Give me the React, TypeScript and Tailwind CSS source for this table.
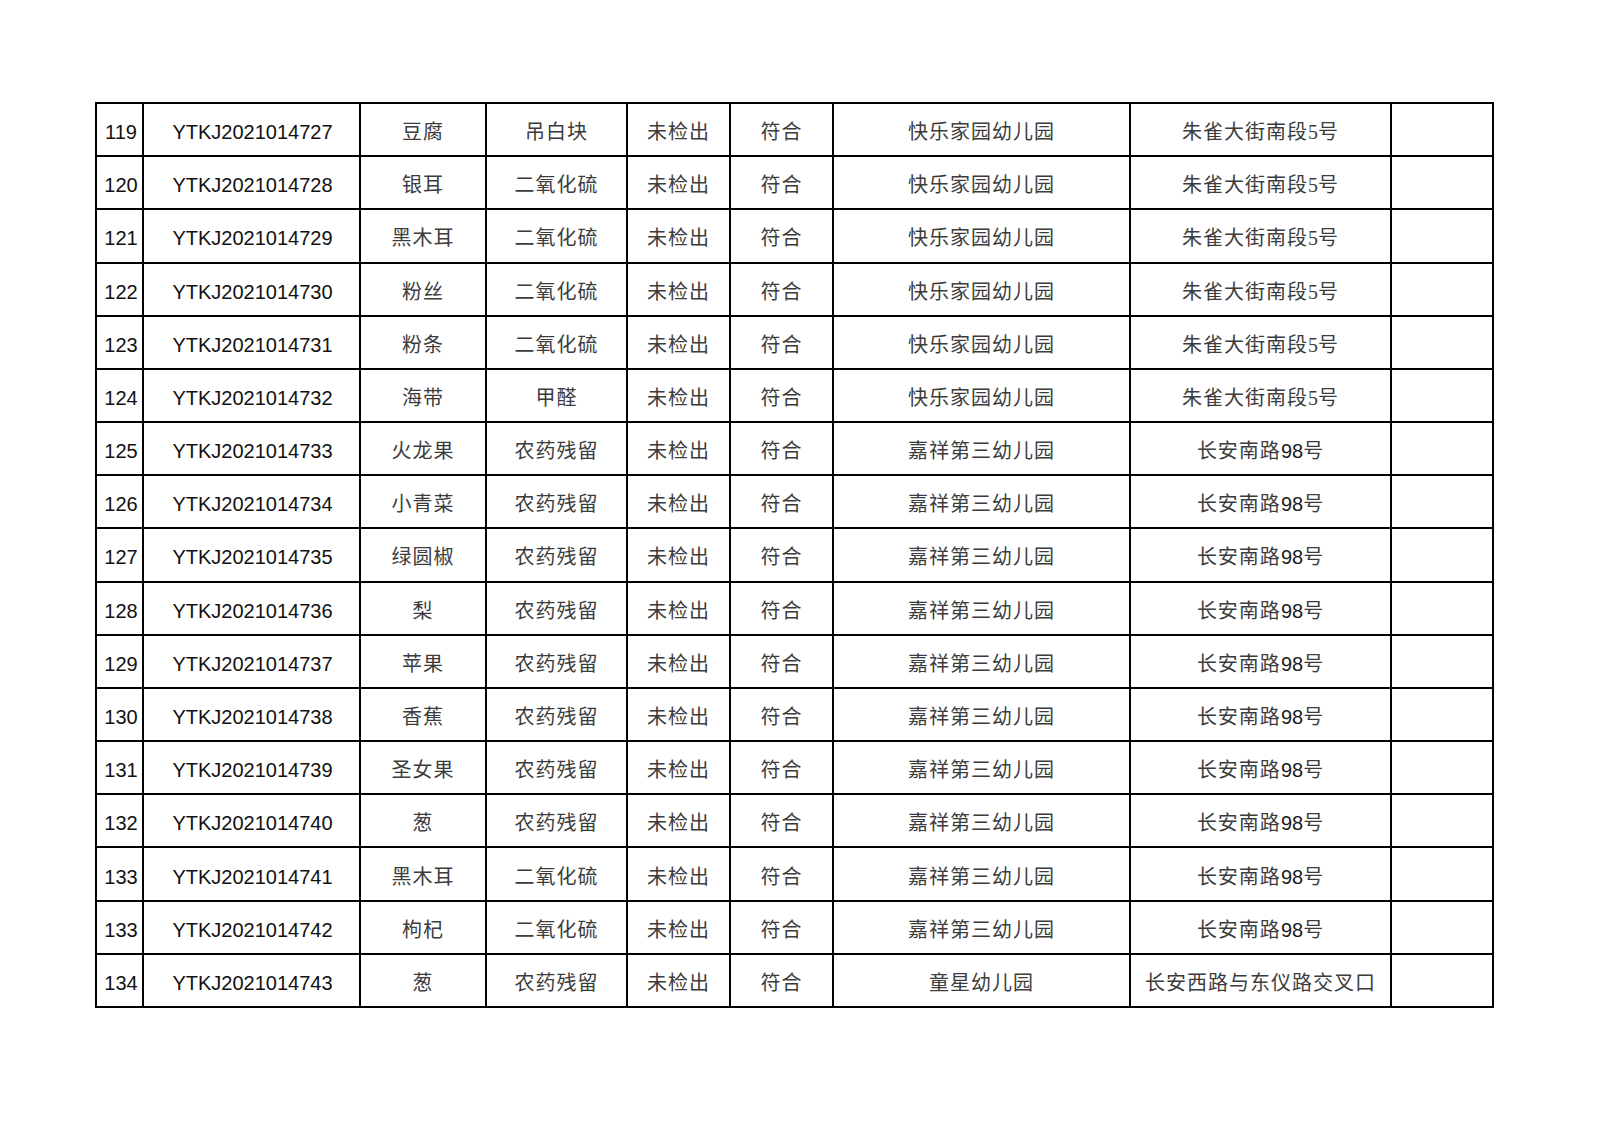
import React from "react";

type Row = [string, string, string, string, string, string, string, React.ReactNode];

const addr1 = (
  <>
    朱雀大街南段<span className="font-['Liberation_Serif'] tracking-normal">5</span>号
  </>
);
const addr2 = (
  <>
    长安南路<span className="text-[#1a1a1a] tracking-normal">98</span>号
  </>
);
const k1 = "快乐家园幼儿园";
const k2 = "嘉祥第三幼儿园";

const rows: Row[] = [
  ["119", "YTKJ2021014727", "豆腐", "吊白块", "未检出", "符合", k1, addr1],
  ["120", "YTKJ2021014728", "银耳", "二氧化硫", "未检出", "符合", k1, addr1],
  ["121", "YTKJ2021014729", "黑木耳", "二氧化硫", "未检出", "符合", k1, addr1],
  ["122", "YTKJ2021014730", "粉丝", "二氧化硫", "未检出", "符合", k1, addr1],
  ["123", "YTKJ2021014731", "粉条", "二氧化硫", "未检出", "符合", k1, addr1],
  ["124", "YTKJ2021014732", "海带", "甲醛", "未检出", "符合", k1, addr1],
  ["125", "YTKJ2021014733", "火龙果", "农药残留", "未检出", "符合", k2, addr2],
  ["126", "YTKJ2021014734", "小青菜", "农药残留", "未检出", "符合", k2, addr2],
  ["127", "YTKJ2021014735", "绿圆椒", "农药残留", "未检出", "符合", k2, addr2],
  ["128", "YTKJ2021014736", "梨", "农药残留", "未检出", "符合", k2, addr2],
  ["129", "YTKJ2021014737", "苹果", "农药残留", "未检出", "符合", k2, addr2],
  ["130", "YTKJ2021014738", "香蕉", "农药残留", "未检出", "符合", k2, addr2],
  ["131", "YTKJ2021014739", "圣女果", "农药残留", "未检出", "符合", k2, addr2],
  ["132", "YTKJ2021014740", "葱", "农药残留", "未检出", "符合", k2, addr2],
  ["133", "YTKJ2021014741", "黑木耳", "二氧化硫", "未检出", "符合", k2, addr2],
  ["133", "YTKJ2021014742", "枸杞", "二氧化硫", "未检出", "符合", k2, addr2],
  ["134", "YTKJ2021014743", "葱", "农药残留", "未检出", "符合", "童星幼儿园", "长安西路与东仪路交叉口"],
];

const cjk = "flex items-center justify-center bg-white pt-[5px] text-[#3c3c3c] tracking-[1px]";

export default function App() {
  return (
    <div className="min-h-[1131px] w-[1600px] bg-white pt-[102px] pl-[95px]">
      <div className="grid w-[1399px] grid-cols-[45px_215px_124px_139px_101px_101px_295px_259px_100px] grid-rows-[repeat(17,1fr)] h-[906px] gap-[2px] bg-black p-[2px] font-['Liberation_Sans','Noto_Sans_CJK_SC',sans-serif] text-[20px] leading-none">
        {rows.map((r, i) => (
          <React.Fragment key={i}>
            <div className="flex items-center justify-center bg-white pt-[5px] pl-[3px] text-[#111]">{r[0]}</div>
            <div className="flex items-center justify-center bg-white pt-[5px] pl-[2px] text-[#111]">{r[1]}</div>
            <div className={cjk}>{r[2]}</div>
            <div className={cjk}>{r[3]}</div>
            <div className={cjk}>{r[4]}</div>
            <div className={cjk}>{r[5]}</div>
            <div className={cjk}>{r[6]}</div>
            <div className={cjk}>{r[7]}</div>
            <div className="bg-white" />
          </React.Fragment>
        ))}
      </div>
    </div>
  );
}
